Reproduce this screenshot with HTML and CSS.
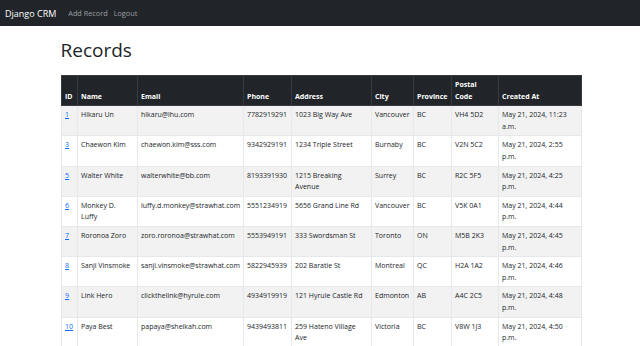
FILE: index.html
```html
<!DOCTYPE html>
<html>
<head>
    <title>Django CRM</title>
    <meta charset="UTF-8">
    <link rel="stylesheet" href="styles.css">
</head>
<body>
    <nav class="navbar">
        <a class="brand" href="#">Django CRM</a>
        <a class="nav-link" href="#">Add Record</a>
        <a class="nav-link" href="#">Logout</a>
    </nav>
    <div class="container">
        <h1>Records</h1>
        <table class="records">
            <colgroup>
                <col class="c-id"><col class="c-name"><col class="c-email"><col class="c-phone"><col class="c-address">
                <col class="c-city"><col class="c-prov"><col class="c-postal"><col class="c-created">
            </colgroup>
            <thead>
                <tr>
                    <th>ID</th><th>Name</th><th>Email</th><th>Phone</th><th>Address</th>
                    <th>City</th><th>Province</th><th>Postal Code</th><th>Created At</th>
                </tr>
            </thead>
            <tbody>
                <tr>
                    <td><a href="#">1</a></td><td>Hikaru Un</td><td>hikaru@lhu.com</td><td>7782919291</td><td>1023 Big Way Ave</td>
                    <td>Vancouver</td><td>BC</td><td>VH4 5D2</td><td>May 21, 2024, 11:23 a.m.</td>
                </tr>
                <tr>
                    <td><a href="#">3</a></td><td>Chaewon Kim</td><td>chaewon.kim@sss.com</td><td>9342929191</td><td>1234 Triple Street</td>
                    <td>Burnaby</td><td>BC</td><td>V2N 5C2</td><td>May 21, 2024, 2:55 p.m.</td>
                </tr>
                <tr>
                    <td><a href="#">5</a></td><td>Walter White</td><td>walterwhite@bb.com</td><td>8193391930</td><td>1215 Breaking Avenue</td>
                    <td>Surrey</td><td>BC</td><td>R2C 5F5</td><td>May 21, 2024, 4:25 p.m.</td>
                </tr>
                <tr>
                    <td><a href="#">6</a></td><td>Monkey D. Luffy</td><td>luffy.d.monkey@strawhat.com</td><td>5551234919</td><td>5656 Grand Line Rd</td>
                    <td>Vancouver</td><td>BC</td><td>V5K 0A1</td><td>May 21, 2024, 4:44 p.m.</td>
                </tr>
                <tr>
                    <td><a href="#">7</a></td><td>Roronoa Zoro</td><td>zoro.roronoa@strawhat.com</td><td>5553949191</td><td>333 Swordsman St</td>
                    <td>Toronto</td><td>ON</td><td>M5B 2K3</td><td>May 21, 2024, 4:45 p.m.</td>
                </tr>
                <tr>
                    <td><a href="#">8</a></td><td>Sanji Vinsmoke</td><td>sanji.vinsmoke@strawhat.com</td><td>5822945939</td><td>202 Baratie St</td>
                    <td>Montreal</td><td>QC</td><td>H2A 1A2</td><td>May 21, 2024, 4:46 p.m.</td>
                </tr>
                <tr>
                    <td><a href="#">9</a></td><td>Link Hero</td><td>clickthelink@hyrule.com</td><td>4934919919</td><td>121 Hyrule Castle Rd</td>
                    <td>Edmonton</td><td>AB</td><td>A4C 2C5</td><td>May 21, 2024, 4:48 p.m.</td>
                </tr>
                <tr>
                    <td><a href="#">10</a></td><td>Paya Best</td><td>papaya@sheikah.com</td><td>9439493811</td><td>259 Hateno Village Ave</td>
                    <td>Victoria</td><td>BC</td><td>V8W 1J3</td><td>May 21, 2024, 4:50 p.m.</td>
                </tr>
            </tbody>
        </table>
    </div>
</body>
</html>
```

FILE: styles.css
```css
/* Base */
body {
    margin: 0;
    font-family: "Open Sans", "Noto Sans", sans-serif;
    color: #212529;
    background-color: #fff;
}
a {
    color: #0d6efd;
}
/* Navbar */
.navbar {
    display: flex;
    align-items: center;
    height: 26px;
    padding: 0 6px 0 5px;
    background-color: #212529;
}
.navbar .brand {
    margin-right: 12px;
    font-size: 9px;
    color: #fff;
    text-decoration: none;
}
.navbar .nav-link {
    margin-right: 6px;
    font-size: 7.3px;
    color: rgba(255, 255, 255, 0.55);
    text-decoration: none;
}
/* Content */
.container {
    width: 520px;
    margin: 0 auto;
    padding-left: 1px;
}
h1 {
    margin: 11px 0 11px;
    font-size: 19px;
    font-weight: 500;
    line-height: 27px;
}
/* Table */
.records {
    width: 520px;
    table-layout: fixed;
    border-collapse: collapse;
    font-size: 7px;
    line-height: 11.6px;
}
.records th,
.records td {
    padding: 3px 3.5px;
    text-align: left;
    vertical-align: top;
    border: 1px solid #e6e8ea;
}
.records thead th {
    vertical-align: bottom;
    font-weight: 700;
    color: #fff;
    background-color: #212529;
    border-color: #373b3e;
}
.records tbody tr:nth-child(odd) td {
    background-color: #f2f2f2;
}
.c-id { width: 16px; }
.c-name { width: 60px; }
.c-email { width: 106px; }
.c-phone { width: 48px; }
.c-address { width: 80px; }
.c-city { width: 42px; }
.c-prov { width: 38px; }
.c-postal { width: 47px; }
.c-created { width: 83px; }
```
